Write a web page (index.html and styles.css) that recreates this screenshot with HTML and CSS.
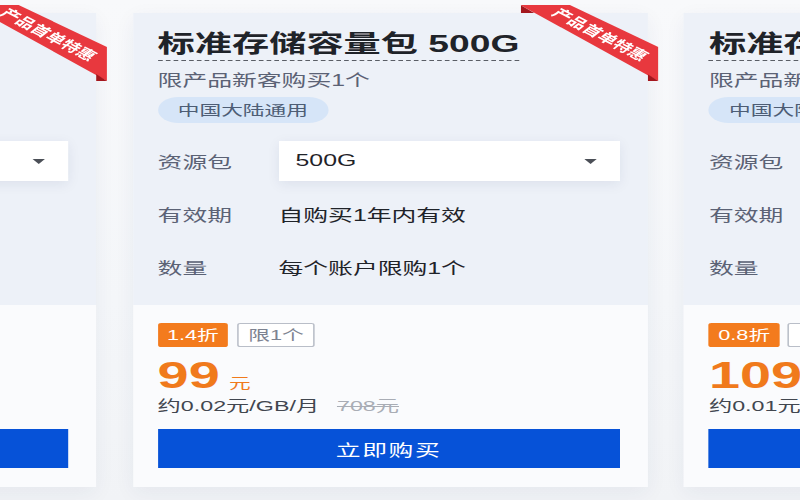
FILE: index.html
```html
<!DOCTYPE html>
<html lang="zh-CN">
<head>
<meta charset="utf-8">
<title>标准存储容量包</title>
<link rel="stylesheet" href="styles.css">
</head>
<body>
<div class="stage">
  <div class="track">
    <section class="card">
      <div class="ribbon"><div class="ribbon-band"><span class="ribbon-text">产品首单特惠</span></div><i class="fold fold-a"></i><i class="fold fold-b"></i></div>
      <div class="card-top">
        <h3 class="title">标准存储容量包 100G</h3>
        <p class="sub">限产品新客购买1个</p>
        <span class="tag">中国大陆通用</span>
        <div class="spec">
          <div class="label">资源包</div><div class="select"><span>100G</span><i class="caret"></i></div>
          <div class="label">有效期</div><div class="value">自购买1年内有效</div>
          <div class="label">数量</div><div class="value">每个账户限购1个</div>
        </div>
      </div>
      <div class="card-bottom">
        <div class="badges"><span class="badge-off">2.0折</span><span class="badge-limit">限1个</span></div>
        <div class="price"><span class="num">29</span><span class="unit">元</span></div>
        <div class="rate">约0.02元/GB/月<s>142元</s></div>
        <button class="buy">立即购买</button>
      </div>
    </section>

    <section class="card">
      <div class="ribbon"><div class="ribbon-band"><span class="ribbon-text">产品首单特惠</span></div><i class="fold fold-a"></i><i class="fold fold-b"></i></div>
      <div class="card-top">
        <h3 class="title">标准存储容量包 500G</h3>
        <p class="sub">限产品新客购买1个</p>
        <span class="tag">中国大陆通用</span>
        <div class="spec">
          <div class="label">资源包</div><div class="select"><span>500G</span><i class="caret"></i></div>
          <div class="label">有效期</div><div class="value">自购买1年内有效</div>
          <div class="label">数量</div><div class="value">每个账户限购1个</div>
        </div>
      </div>
      <div class="card-bottom">
        <div class="badges"><span class="badge-off">1.4折</span><span class="badge-limit">限1个</span></div>
        <div class="price"><span class="num">99</span><span class="unit">元</span></div>
        <div class="rate">约0.02元/GB/月<s>708元</s></div>
        <button class="buy">立即购买</button>
      </div>
    </section>

    <section class="card">
      <div class="ribbon"><div class="ribbon-band"><span class="ribbon-text">产品首单特惠</span></div><i class="fold fold-a"></i><i class="fold fold-b"></i></div>
      <div class="card-top">
        <h3 class="title">标准存储容量包 1T</h3>
        <p class="sub">限产品新客购买1个</p>
        <span class="tag">中国大陆通用</span>
        <div class="spec">
          <div class="label">资源包</div><div class="select"><span>1T</span><i class="caret"></i></div>
          <div class="label">有效期</div><div class="value">自购买1年内有效</div>
          <div class="label">数量</div><div class="value">每个账户限购1个</div>
        </div>
      </div>
      <div class="card-bottom">
        <div class="badges"><span class="badge-off">0.8折</span><span class="badge-limit">限1个</span></div>
        <div class="price"><span class="num">109</span><span class="unit">元</span></div>
        <div class="rate">约0.01元/GB/月<s>1416元</s></div>
        <button class="buy">立即购买</button>
      </div>
    </section>
  </div>
</div>
</body>
</html>
```

FILE: styles.css
```css
html, body {
  margin: 0;
  padding: 0;
  overflow: hidden;
}
body {
  width: 800px;
  height: 500px;
  background: linear-gradient(#f8f9fb 0, #f4f6f9 60%, #f1f3f6 100%);
  font-family: "Liberation Sans", "Noto Sans CJK SC", sans-serif;
  color: #1f2329;
}
.stage {
  width: 516px;
  padding-top: 13px;
  transform: scaleX(1.55);
  transform-origin: 0 0;
}
.track {
  display: flex;
  gap: 23.7px;
  margin-left: -270px;
}
.card {
  position: relative;
  flex: 0 0 332px;
  width: 332px;
  display: flex;
  flex-direction: column;
  box-shadow: 0 6px 16px rgba(30, 50, 100, 0.06);
}
.card-top {
  background: #edf1f8;
  padding: 16px 18px 18px 16px;
  display: flex;
  flex-direction: column;
  align-items: flex-start;
}
.title {
  margin: 0;
  font-size: 24px;
  font-weight: 700;
  line-height: 30px;
  padding-bottom: 1px;
  border-bottom: 1px dashed #5a5e66;
  color: #1f2329;
  white-space: nowrap;
}
.sub {
  margin: 8px 0 0;
  font-size: 16px;
  line-height: 24px;
  color: #5b6275;
}
.tag {
  margin-top: 4px;
  height: 26px;
  line-height: 26px;
  padding: 0 13px;
  border-radius: 13px;
  background: #d6e5f8;
  color: #4d5d75;
  font-size: 14px;
}
.spec {
  align-self: stretch;
  margin-top: 18px;
  display: grid;
  grid-template-columns: 78px 1fr;
  grid-auto-rows: 40px;
  row-gap: 13px;
  align-items: center;
  font-size: 16px;
}
.label {
  color: #5b6275;
}
.value {
  color: #1f2329;
}
.select {
  height: 40px;
  display: flex;
  align-items: center;
  padding: 0 15px 0 11px;
  background: #ffffff;
  color: #1f2329;
  box-shadow: 0 3px 10px rgba(20, 40, 90, 0.08);
}
.caret {
  margin-left: auto;
  width: 0;
  height: 0;
  border-left: 4.5px solid transparent;
  border-right: 4.5px solid transparent;
  border-top: 5px solid #4b4f57;
}
.card-bottom {
  background: #fafbfd;
  padding: 18px 18px 19px 16px;
  display: flex;
  flex-direction: column;
  align-items: flex-start;
}
.badges {
  display: flex;
  gap: 5.5px;
  height: 24px;
}
.badge-off {
  height: 24px;
  line-height: 24px;
  padding: 0 6px;
  border-radius: 2px;
  background: #f37b1d;
  color: #ffffff;
  font-size: 14px;
}
.badge-limit {
  height: 22px;
  line-height: 22px;
  padding: 0 6.5px;
  border: 1px solid #b9bec8;
  border-radius: 2px;
  background: #ffffff;
  color: #7d8391;
  font-size: 14px;
}
.price {
  margin-top: 9px;
  height: 40px;
  line-height: 40px;
  color: #f07a1c;
  white-space: nowrap;
}
.num {
  font-size: 36px;
  font-weight: 700;
}
.unit {
  font-size: 14px;
  margin-left: 6px;
}
.rate {
  line-height: 20px;
  font-size: 15px;
  color: #41464f;
  white-space: nowrap;
}
.rate s {
  margin-left: 11.5px;
  color: #a9adb5;
}
.buy {
  margin-top: 13px;
  align-self: stretch;
  height: 39px;
  border: 0;
  border-radius: 0;
  background: #0652d8;
  color: #ffffff;
  font-family: inherit;
  font-size: 16px;
  letter-spacing: 1px;
  padding: 0;
}
.ribbon {
  position: absolute;
  left: 250px;
  top: -8px;
  width: 89px;
  height: 76px;
  z-index: 2;
  pointer-events: none;
}
.ribbon-band {
  position: absolute;
  inset: 0;
  background: #e8383e;
  clip-path: polygon(0 0, 32px 0, 89px 42px, 89px 76px);
}
.ribbon-text {
  position: absolute;
  left: 51px;
  top: 30px;
  transform: translate(-50%, -50%) rotate(39deg);
  color: #ffffff;
  font-size: 12.5px;
  font-weight: 700;
  line-height: 14px;
  white-space: nowrap;
}
.fold {
  position: absolute;
  background: #a3161d;
}
.fold-a {
  left: 0;
  top: 0;
  width: 9px;
  height: 8px;
  clip-path: polygon(0 0, 9px 8px, 0 8px);
}
.fold-b {
  left: 82px;
  top: 69px;
  width: 7px;
  height: 7px;
  clip-path: polygon(0 0, 7px 7px, 0 7px);
}
```
